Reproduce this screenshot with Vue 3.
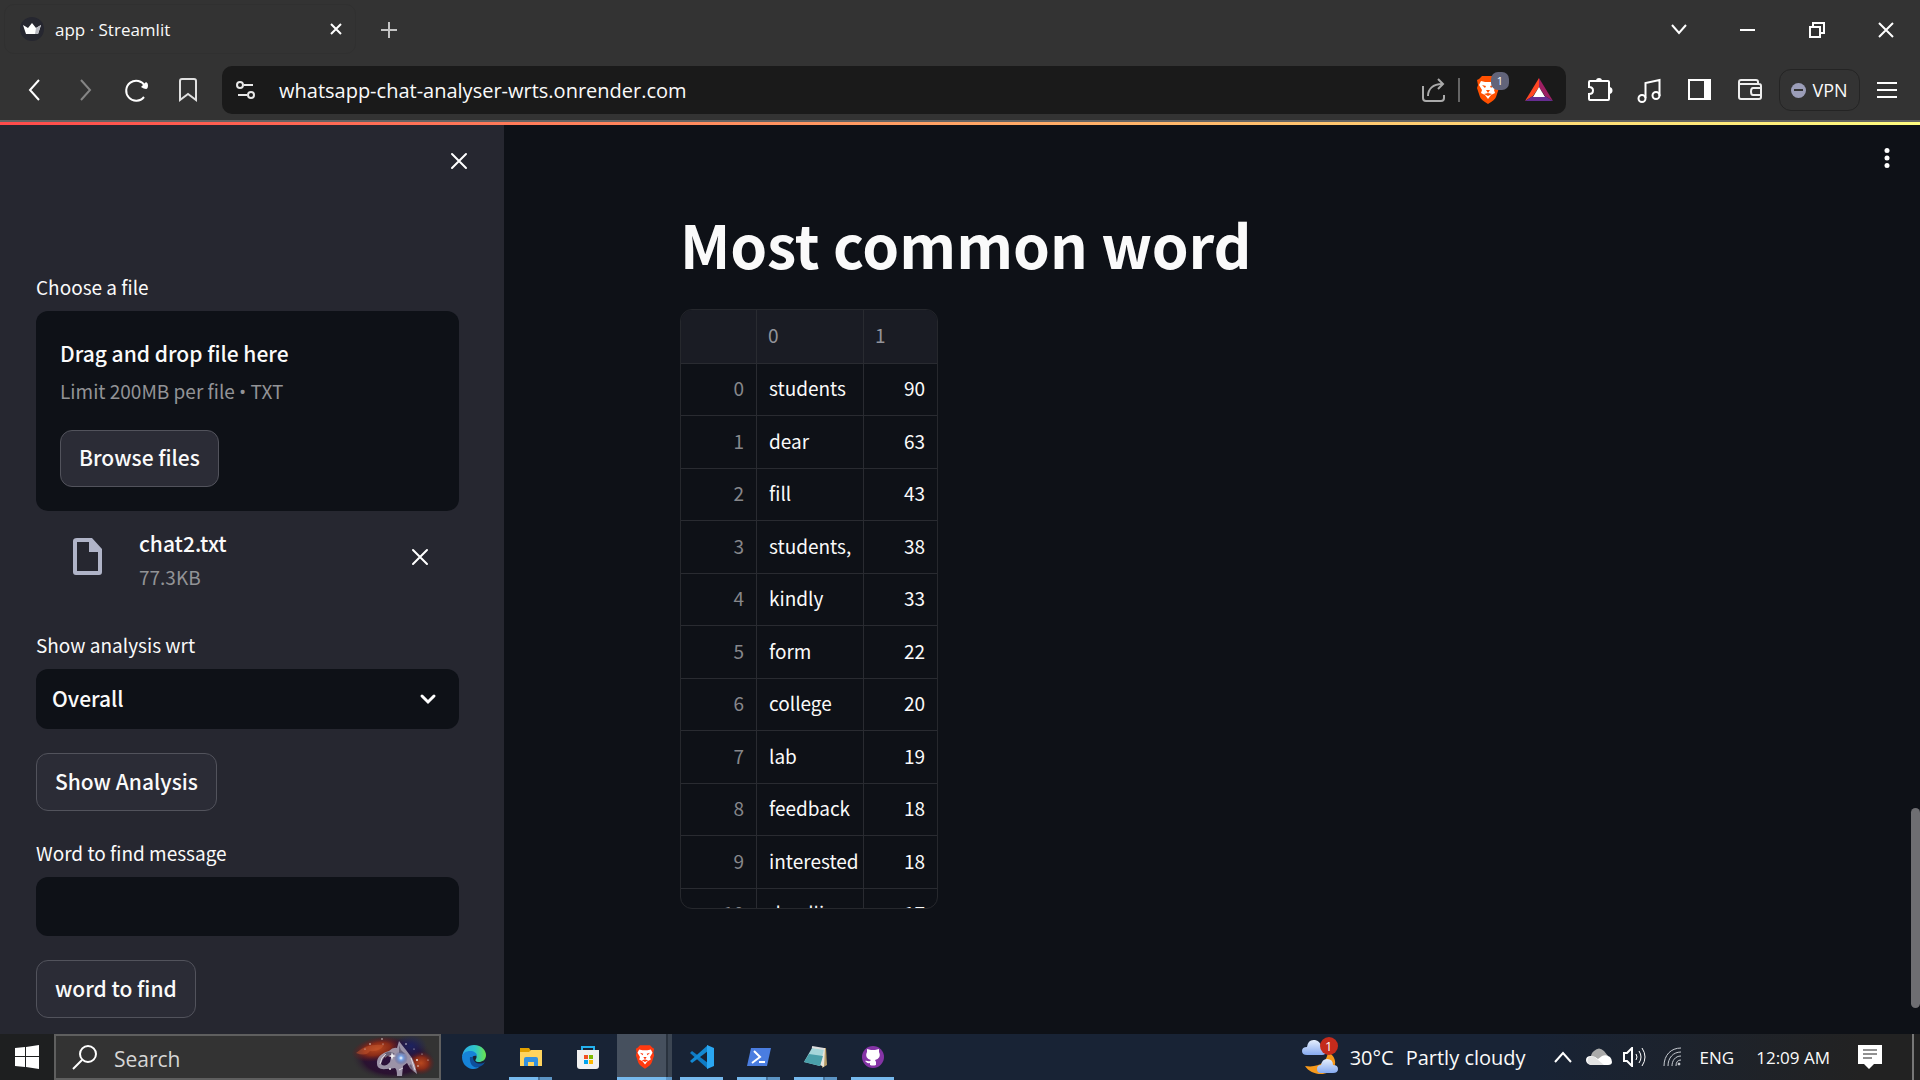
<script setup>
import { ref } from 'vue'

const user = ref('Overall')
const word = ref('')
const query = ref('')

const rows = [
  ['students', 90],
  ['dear', 63],
  ['fill', 43],
  ['students,', 38],
  ['kindly', 33],
  ['form', 22],
  ['college', 20],
  ['lab', 19],
  ['feedback', 18],
  ['interested', 18],
  ['deadline', 17],
]
</script>

<template>
  <div class="screen">
    <header class="browser">
      <div class="tabs">
        <div class="tab">
          <svg class="favicon" width="24" height="24" viewBox="0 0 24 24">
            <circle cx="12" cy="12" r="12" fill="#262730" />
            <path d="M3 8l5 3 4-5 4 5 5-3-3 9H6z" fill="#fff" />
            <path d="M16 11l5-3-3 9h-3z" fill="#b9bac2" />
          </svg>
          <span class="tab-title">app · Streamlit</span>
          <button class="tab-close" aria-label="Close tab">
            <svg width="12" height="12" viewBox="0 0 12 12"><path d="M1 1l10 10M11 1L1 11" stroke="#fff" stroke-width="2" /></svg>
          </button>
        </div>
        <button class="new-tab" aria-label="New tab">
          <svg width="16" height="16" viewBox="0 0 16 16"><path d="M8 0v16M0 8h16" stroke="#c4c4c4" stroke-width="2" /></svg>
        </button>
        <div class="window-controls">
          <button aria-label="Search tabs">
            <svg width="18" height="14" viewBox="0 0 18 14"><path d="M2 2l7 8 7-8" fill="none" stroke="#fff" stroke-width="2" /></svg>
          </button>
          <button aria-label="Minimize">
            <svg width="16" height="16" viewBox="0 0 16 16"><path d="M0 8h15" stroke="#fff" stroke-width="2" /></svg>
          </button>
          <button aria-label="Restore">
            <svg width="16" height="16" viewBox="0 0 16 16"><path d="M1 5h10v10H1zM4 5V1h11v10h-4" fill="none" stroke="#fff" stroke-width="2" /></svg>
          </button>
          <button aria-label="Close">
            <svg width="16" height="16" viewBox="0 0 16 16"><path d="M1 1l14 14M15 1L1 15" stroke="#fff" stroke-width="2" /></svg>
          </button>
        </div>
      </div>

      <div class="toolbar">
        <button class="nav" aria-label="Back">
          <svg width="24" height="24" viewBox="0 0 24 24"><path d="M16 2L7 12l9 10" fill="none" stroke="#fff" stroke-width="2" /></svg>
        </button>
        <button class="nav" aria-label="Forward">
          <svg width="24" height="24" viewBox="0 0 24 24"><path d="M7 2l9 10-9 10" fill="none" stroke="#858585" stroke-width="2" /></svg>
        </button>
        <button class="nav" aria-label="Reload">
          <svg width="26" height="26" viewBox="0 0 26 26"><path d="M20 20a10 10 0 1 1 1-11" fill="none" stroke="#fff" stroke-width="2" /><path d="M17 10l5-5q2 1 2 3 0 4-2 4-2 0-5-2z" fill="#fff" /></svg>
        </button>
        <button class="nav" aria-label="Bookmark">
          <svg width="24" height="24" viewBox="0 0 24 24"><path d="M4 3q0-2 2-2h12q2 0 2 2v19l-8-6-8 6z" fill="none" stroke="#e0e0e0" stroke-width="2" /></svg>
        </button>

        <div class="address">
          <svg class="tune" width="20" height="20" viewBox="0 0 20 20" fill="none" stroke="#e8e8e8" stroke-width="2">
            <circle cx="4" cy="5" r="3" /><path d="M8 5h9" /><circle cx="15" cy="15" r="3" /><path d="M2 15h9" />
          </svg>
          <span class="url">whatsapp-chat-analyser-wrts.onrender.com</span>
          <svg width="24" height="24" viewBox="0 0 24 24" fill="none" stroke="#aaa" stroke-width="2">
            <path d="M1 8v12q0 3 3 3h15q3 0 3-3v-3" /><path d="M6 18C6 11 11 6 20 6" /><path d="M16 1l5 5-5 5" />
          </svg>
          <i class="divider"></i>
          <button class="shield" aria-label="Brave Shields">
            <svg width="24" height="28" viewBox="0 0 24 28">
              <path d="M6 0h12l3 3 2 1-1 5 1 3-3 9q-1 3-8 7-7-4-8-7L1 12l1-3-1-5 2-1z" fill="#ff5000" />
              <path d="M5 5l4 1h6l4-1 2 4-3 5 1 3-4 2-3 4-3-4-4-2 1-3-3-5z" fill="#fff" />
              <path d="M6 9l4 1-1 2zM18 9l-4 1 1 2zM10 14h4l-2 3zM8 18l4-1 4 1-4 2z" fill="#ff5000" />
            </svg>
            <span class="count">1</span>
          </button>
          <svg width="28" height="24" viewBox="0 0 28 24">
            <path d="M14 0v9l-6 9-8 5z" fill="#ff4724" /><path d="M14 0v9l6 9 8 5z" fill="#9e1f63" /><path d="M0 23l8-5h12l8 5z" fill="#662d91" /><path d="M14 9l6 10H8z" fill="#fff" />
          </svg>
        </div>

        <button class="tool" aria-label="Extensions">
          <svg width="26" height="26" viewBox="0 0 26 26"><path d="M3 4h18q1 0 1 1v17q0 1-1 1H3q-1 0-1-1v-5q4 0 4-3.500T2 10V5q0-1 1-1z" fill="none" stroke="#fff" stroke-width="2" /><path d="M9 4a3 3 0 0 1 6 0zM22 10a3 3 0 0 1 0 7z" fill="#fff" /></svg>
        </button>
        <button class="tool" aria-label="Media">
          <svg width="26" height="26" viewBox="0 0 26 26" fill="none" stroke="#fff" stroke-width="2"><circle cx="5" cy="21.500" r="3.500" /><circle cx="19" cy="18.500" r="3.500" /><path d="M8.500 21V6l14-3v16" /></svg>
        </button>
        <button class="tool" aria-label="Sidebar">
          <svg width="24" height="22" viewBox="0 0 24 22"><rect x="1" y="1" width="21" height="19" fill="none" stroke="#fff" stroke-width="2" /><path d="M16 1h7v20h-7z" fill="#fff" /></svg>
        </button>
        <button class="tool" aria-label="Wallet">
          <svg width="24" height="22" viewBox="0 0 24 22" fill="none" stroke="#eee" stroke-width="2"><path d="M20 5V3q0-2-2-2H3Q1 1 1 3v15q0 2 2 2h18q2 0 2-2V7q0-2-2-2H2M22 9h-7q-2 0-2 3.500t2 3.500h7" /></svg>
        </button>
        <button class="vpn"><i class="vpn-dot"></i>VPN</button>
        <button class="menu" aria-label="Menu">
          <svg width="20" height="16" viewBox="0 0 20 16"><path d="M0 1h20M0 8h20M0 15h20" stroke="#fff" stroke-width="2" /></svg>
        </button>
      </div>
    </header>
    <div class="decoration"></div>

    <div class="app">
      <aside class="sidebar">
        <div class="sidebar-head">
          <button aria-label="Close sidebar">
            <svg width="18" height="18" viewBox="0 0 18 18"><path d="M2 2l14 14M16 2L2 16" stroke="#fff" stroke-width="2" stroke-linecap="round" /></svg>
          </button>
        </div>

        <label class="label" for="browse">Choose a file</label>
        <section class="dropzone">
          <div class="drop-title">Drag and drop file here</div>
          <div class="drop-hint">Limit 200MB per file <span class="bullet">•</span> TXT</div>
          <button id="browse" class="btn">Browse files</button>
        </section>
        <div class="file">
          <svg width="30" height="38" viewBox="0 0 30 38"><path d="M4 0h15l10 11v23q0 3-3 3H3q-3 0-3-3V3q0-3 4-3zM4 4v29h21V14h-9V4z" fill="#b0b4c8" fill-rule="evenodd" /></svg>
          <div class="file-text">
            <div class="file-name">chat2.txt</div>
            <div class="file-size">77.3KB</div>
          </div>
          <button aria-label="Remove file">
            <svg width="18" height="18" viewBox="0 0 18 18"><path d="M2 2l14 14M16 2L2 16" stroke="#fff" stroke-width="2" stroke-linecap="round" /></svg>
          </button>
        </div>

        <label class="label" for="user">Show analysis wrt</label>
        <div class="select">
          <select id="user" v-model="user"><option>Overall</option></select>
          <svg width="18" height="12" viewBox="0 0 18 12"><path d="M3 3l6 6 6-6" fill="none" stroke="#fff" stroke-width="3" stroke-linecap="round" /></svg>
        </div>
        <button class="btn spaced">Show Analysis</button>

        <label class="label" for="word">Word to find message</label>
        <input id="word" v-model="word" class="text" type="text" />
        <button class="btn spaced last">word to find</button>
      </aside>

      <main class="main">
        <button class="kebab" aria-label="App menu">
          <svg width="6" height="22" viewBox="0 0 6 22" fill="#fff"><circle cx="3" cy="3.500" r="2.500" /><circle cx="3" cy="11" r="2.500" /><circle cx="3" cy="18.500" r="2.500" /></svg>
        </button>
        <div class="block">
          <h1>Most common word</h1>
          <div class="frame">
            <table>
              <thead>
                <tr><th class="idx"></th><th class="word">0</th><th class="num">1</th></tr>
              </thead>
              <tbody>
                <tr v-for="(row, i) in rows" :key="i">
                  <td class="idx">{{ i }}</td>
                  <td class="word">{{ row[0] }}</td>
                  <td class="num">{{ row[1] }}</td>
                </tr>
              </tbody>
            </table>
          </div>
        </div>
        <i class="thumb"></i>
      </main>
    </div>

    <footer class="taskbar">
      <button class="start" aria-label="Start">
        <svg width="24" height="24" viewBox="0 0 24 24" fill="#fff"><path d="M0 3l10-1v9H0zM11 2l13-2v11H11zM0 12h10v10L0 21zM11 12h13v12l-13-2z" /></svg>
      </button>
      <div class="search">
        <svg width="25" height="25" viewBox="0 0 25 25" fill="none" stroke="#fff" stroke-width="2"><circle cx="16" cy="9" r="8" /><path d="M10 15l-9 9" /></svg>
        <input v-model="query" type="text" placeholder="Search" aria-label="Search" />
        <svg class="nebula" width="84" height="42" viewBox="0 0 84 42">
          <defs>
            <radialGradient id="nebA"><stop offset="0" stop-color="#2c1040" /><stop offset=".7" stop-color="#2a1230" /><stop offset="1" stop-color="#333" stop-opacity="0" /></radialGradient>
            <radialGradient id="nebB"><stop offset="0" stop-color="#b8481f" /><stop offset=".5" stop-color="#8a2c18" /><stop offset="1" stop-color="#5a1a20" stop-opacity="0" /></radialGradient>
            <radialGradient id="nebC"><stop offset="0" stop-color="#fff" /><stop offset=".3" stop-color="#7aa6e8" /><stop offset="1" stop-color="#3a4a90" stop-opacity="0" /></radialGradient>
            <radialGradient id="nebD"><stop offset="0" stop-color="#1c2360" /><stop offset="1" stop-color="#1c2360" stop-opacity="0" /></radialGradient>
          </defs>
          <ellipse cx="42" cy="22" rx="42" ry="23" fill="url(#nebA)" />
          <ellipse cx="26" cy="13" rx="26" ry="12" fill="url(#nebB)" transform="rotate(-12 26 13)" />
          <ellipse cx="70" cy="27" rx="14" ry="12" fill="url(#nebB)" />
          <ellipse cx="60" cy="10" rx="16" ry="12" fill="url(#nebD)" />
          <path d="M5 17q10-10 28-8-4 7-14 6-4 6-14 2z" fill="#c85a30" opacity=".5" />
          <path d="M26 28q-1-9 12-13 4-4 8-3l2-7 3 4 4 5 6 8 3 7 2 9-7-6-3-5-4 3-1 10h-5q0-7-2-8-5 1-9 1-9 1-9-5zM30 28q4 4 9-2l2-9q-9 2-11 11z" fill="#a9a2b4" fill-rule="evenodd" opacity=".9" />
          <path d="M34 17q6-3 10 1-6 0-10 4zM48 9l2 5 4 4-6-1zM60 28l3 8-5-6z" fill="#6a6278" />
          <path d="M29 28q1-7 6-10M60 22l4 12M48 34l4-2" fill="none" stroke="#eee6ea" opacity=".8" />
          <circle cx="50" cy="22" r="7" fill="url(#nebC)" />
          <g fill="#fff" opacity=".85"><circle cx="19" cy="8" r=".8" /><circle cx="31" cy="3" r=".8" /><circle cx="14" cy="13" r=".6" /><circle cx="32" cy="8" r=".6" /><circle cx="66" cy="24" r="1" /><circle cx="71" cy="18" r=".6" /><circle cx="77" cy="24" r=".6" /><circle cx="39" cy="33" r="1" /><circle cx="55" cy="8" r=".8" /><circle cx="63" cy="13" r=".6" /><circle cx="67" cy="30" r=".8" /><path d="M41 16l1 3 3 1-3 1-1 3-1-3-3-1 3-1z" /></g>
        </svg>
      </div>
      <nav class="tasks">
        <button class="task" aria-label="Microsoft Edge">
          <svg width="24" height="24" viewBox="0 0 24 24">
            <defs><linearGradient id="edgeTop"><stop offset="0" stop-color="#2aa9e8" /><stop offset=".55" stop-color="#2fc5c8" /><stop offset="1" stop-color="#6be54a" /></linearGradient></defs>
            <path d="M0 12C1 4 6 0 12 0c8 0 12 6 12 10 0 5-4 7-7 7-4 0-4-2-3-3 2-3-1-7-5-7-5 0-8 3-9 5z" fill="url(#edgeTop)" />
            <path d="M0 12C1 8 4 6 8 6c4 0 7 2 7 5-3-1-6 1-6 4 0 4 4 7 8 7-2 2-5 2-7 2C4 23 0 18 0 12z" fill="#1683d8" />
            <path d="M8 12c-1 6 3 12 9 10 3-1 5-3 6-5-4 3-12 2-12-5z" fill="#0d4f9c" />
          </svg>
        </button>
        <button class="task open many" aria-label="File Explorer">
          <svg width="24" height="20" viewBox="0 0 24 20"><path d="M1 1h9l2 3-2 3H1z" fill="#e2a100" /><path d="M1 5h9l2-2h11v16H1z" fill="#ffd45e" /><path d="M5 19v-7q0-2 2-2h10q2 0 2 2v7h-4v-4H9v4z" fill="#3390df" /></svg>
        </button>
        <button class="task" aria-label="Microsoft Store">
          <svg width="24" height="24" viewBox="0 0 24 24"><path d="M6 6V2h12v4" fill="none" stroke="#24b2ef" stroke-width="2" /><path d="M1 5h22v16q0 3-3 3H4q-3 0-3-3z" fill="#f1f1f1" /><path d="M8 10h4v4H8z" fill="#f25022" /><path d="M13 10h4v4h-4z" fill="#7fba00" /><path d="M8 15h4v4H8z" fill="#00a4ef" /><path d="M13 15h4v4h-4z" fill="#ffb900" /></svg>
        </button>
        <button class="task active open" aria-label="Brave">
          <svg width="20" height="24" viewBox="0 0 24 28">
            <path d="M6 0h12l3 3 2 1-1 5 1 3-3 9q-1 3-8 7-7-4-8-7L1 12l1-3-1-5 2-1z" fill="#ff3a10" />
            <path d="M5 5l4 1h6l4-1 2 4-3 5 1 3-4 2-3 4-3-4-4-2 1-3-3-5z" fill="#fff" />
            <path d="M6 9l4 1-1 2zM18 9l-4 1 1 2zM10 14h4l-2 3zM8 18l4-1 4 1-4 2z" fill="#ff3a10" />
          </svg>
        </button>
        <button class="task open" aria-label="Visual Studio Code">
          <svg width="24" height="24" viewBox="0 0 24 24"><path d="M0 8l2-2 16 12v6z" fill="#0f7bc4" /><path d="M0 16l2 2L18 6V0z" fill="#1389d3" /><path d="M17 0l7 3v18l-7 3z" fill="#2aa7f2" /></svg>
        </button>
        <button class="task open many" aria-label="PowerShell">
          <svg width="24" height="18" viewBox="0 0 24 18"><path d="M4 0h20l-4 18H0z" fill="#4a7de0" /><path d="M7 3l6 6-8 6M12 14h6" fill="none" stroke="#fff" stroke-width="2" /></svg>
        </button>
        <button class="task open many" aria-label="Notepad">
          <svg width="24" height="22" viewBox="0 0 24 22"><path d="M20 2h2l1 17-5 3z" fill="#b69d67" /><path d="M9 2h12l-1 19-4-2z" fill="#e8e6dc" /><path d="M8 2l12 1-4 17-16-4z" fill="#a5d6da" /><path d="M5 8l14 2-3 10-16-4z" fill="#4aa0aa" /><path d="M8 1l12 2" stroke="#ddd" stroke-width="2" /></svg>
        </button>
        <button class="task open" aria-label="GitHub Desktop">
          <svg width="24" height="24" viewBox="0 0 24 24"><circle cx="12" cy="12" r="11" fill="#8534a6" /><path d="M9 20v-2c-3 1-3-1-5-2 2-1 3 1 5 0l1-1c-4-1-6-4-4-8V4l4 1h4l4-1v3c2 4 0 7-4 8l1 2v3q-3 1-6 0z" fill="#fff" /></svg>
        </button>
      </nav>

      <div class="tray">
        <div class="weather">
          <div class="weather-icon">
            <svg width="36" height="36" viewBox="0 0 36 36">
              <defs><linearGradient id="cloudFill" x2="0" y2="1"><stop offset="0" stop-color="#e6effc" /><stop offset="1" stop-color="#86aaf0" /></linearGradient></defs>
              <path d="M26 13c6 3 9 10 6 15-5 10-23 9-29-1 14 2 22-4 23-14z" fill="#f79a1c" />
              <path d="M5 16q-5 0-5-4t5-4q1-8 8-7 5 1 6 6 5 0 5 5 0 4-4 4z" fill="url(#cloudFill)" />
              <path d="M19 34q-4 0-4-4t4-4q1-6 6-6 6 0 6 6 5 0 5 4t-5 4z" fill="url(#cloudFill)" />
            </svg>
            <span class="alert">1</span>
          </div>
          <span class="temp">30°C</span>
          <span>Partly cloudy</span>
        </div>
        <svg class="caret" width="18" height="12" viewBox="0 0 18 12"><path d="M1 11l8-9 8 9" fill="none" stroke="#fff" stroke-width="2" /></svg>
        <svg class="cloud" width="26" height="18" viewBox="0 0 26 18"><path d="M5 12q-1-6 3-9 5-5 10 0l4 5-10 4z" fill="#aaa" /><path d="M5 17q-5-1-5-5t5-4q4 0 7 3l4-3q4-2 8 1 2 2 2 5t-4 3z" fill="#fff" /><path d="M2 10q4-4 9 1l7 6H5q-5-1-3-7z" fill="#e3e3e3" /></svg>
        <svg class="speaker" width="24" height="20" viewBox="0 0 24 20" fill="none" stroke="#fff"><path d="M1 6h3l5-5v18l-5-5H1z" stroke-width="2" /><path d="M13 7q2 3 0 6M16 4q4 6 0 12M19 1q6 9 0 18" /></svg>
        <svg class="wifi" width="19" height="20" viewBox="0 0 19 20" fill="none" stroke="#c8ccd2" stroke-width="1"><path d="M1 19C1 8 8 1 18 1M5 19C5 11 10 5 18 5M9 19c0-5 3-10 9-10M13 19q0-6 5-6" /><circle cx="16" cy="17" r="1" fill="#fff" /></svg>
        <span class="lang">ENG</span>
        <time>12:09 AM</time>
        <button class="notes" aria-label="Notifications">
          <svg width="24" height="24" viewBox="0 0 24 24"><path d="M0 0h24v19h-8l-5 5-5-5H0z" fill="#fff" /><path d="M5 5h14M5 9h14M5 13h9" stroke="#222" stroke-width="1" /></svg>
        </button>
        <i class="desktop-edge"></i>
      </div>
    </footer>
  </div>
</template>

<style>
body { background: #0e1117; }
</style>

<style scoped>
.screen {
  display: flex;
  flex-direction: column;
  height: 100vh;
  overflow: hidden;
  box-sizing: border-box;
  color: #fafafa;
  font-family: "Noto Sans CJK SC", "Noto Sans", sans-serif;
}
.screen * { box-sizing: border-box; }
svg { display: block; flex: none; }
button {
  display: flex;
  align-items: center;
  justify-content: center;
  padding: 0;
  border: 0;
  background: none;
  color: inherit;
  font: inherit;
}

/* Browser chrome */
.browser {
  flex: none;
  background: #333;
  border-bottom: 2px solid #636363;
  font-family: "Open Sans", "Noto Sans", sans-serif;
}
.tabs { display: flex; height: 60px; }
.tab {
  display: flex;
  align-items: center;
  width: 352px;
  height: 50px;
  margin: 4px 0 0 4px;
  padding: 0 11px 0 15px;
  border: 1px solid #303030;
  border-radius: 10px;
}
.tab-title { flex: 1; margin-left: 11px; font-size: 17px; }
.tab-close { width: 16px; height: 24px; }
.new-tab { width: 32px; height: 60px; margin-left: 17px; }
.window-controls { display: flex; margin-left: auto; }
.window-controls button { width: 69px; height: 59px; }
.toolbar { display: flex; align-items: center; height: 60px; padding: 0 13px 0 9px; }
.nav { width: 51px; height: 48px; }
.address {
  display: flex;
  flex: 1;
  align-items: center;
  height: 48px;
  margin: 0 9px;
  padding: 0 13px 0 14px;
  border-radius: 10px;
  background: #1a1a1a;
  font-size: 20px;
}
.url { flex: 1; margin-left: 23px; }
.divider { width: 2px; height: 24px; margin: 0 16px 0 12px; background: #666; }
.shield { position: relative; margin-right: 25px; }
.count {
  position: absolute;
  top: -4px;
  right: -9px;
  width: 18px;
  height: 18px;
  border-radius: 7px;
  background: #62647a;
  font-size: 11px;
  line-height: 18px;
  text-align: center;
}
.tool { width: 50px; height: 48px; }
.vpn {
  gap: 6px;
  width: 81px;
  height: 42px;
  margin-left: 4px;
  border: 1px solid #242424;
  border-radius: 12px;
  font-size: 18px;
}
.vpn-dot {
  display: flex;
  align-items: center;
  justify-content: center;
  width: 15px;
  height: 15px;
  border-radius: 50%;
  background: #9b9db8;
}
.vpn-dot::after { width: 9px; height: 2px; background: #333; content: ""; }
.menu { width: 40px; height: 48px; margin-left: 7px; }
.decoration { flex: none; height: 3px; background: linear-gradient(90deg, #ff4b4b, #fffd80); }

/* App */
.app { display: flex; flex: 1; min-height: 0; background: #0e1117; }
.sidebar {
  flex: none;
  width: 504px;
  padding: 0 45px 0 36px;
  overflow: hidden;
  background: #262730;
}
.sidebar-head { display: flex; justify-content: flex-end; height: 144px; margin-right: -9px; padding-top: 27px; }
.sidebar-head button { height: 18px; }
.label { display: block; height: 34px; margin-bottom: 8px; font-size: 19px; line-height: 36px; }
.dropzone { padding: 23px 24px 24px; border-radius: 12px; background: #0e1117; }
.drop-title { height: 38px; font-size: 21px; font-weight: 500; line-height: 38px; }
.drop-hint { height: 38px; margin-bottom: 20px; color: #929396; font-size: 19px; line-height: 38px; }
.bullet { font-family: "Open Sans", sans-serif; }
.btn {
  height: 58px;
  padding: 0 18px 3px;
  border: 1px solid #52535c;
  border-radius: 12px;
  background: #2b2c36;
  font-size: 21px;
  font-weight: 500;
}
.dropzone .btn { height: 57px; }
.file { display: flex; align-items: center; height: 92px; margin-bottom: 24px; padding: 0 30px 0 37px; }
.file-text { flex: 1; margin-left: 36px; padding-top: 5px; }
.file-name { font-size: 21px; font-weight: 500; line-height: 34px; }
.file-size { color: #929396; font-size: 19px; line-height: 34px; }
.select { position: relative; }
.select select {
  width: 100%;
  height: 60px;
  padding: 0 16px 3px;
  border: 0;
  border-radius: 12px;
  appearance: none;
  background: #0e1117;
  color: inherit;
  font: inherit;
  font-size: 21px;
  font-weight: 500;
}
.select svg { position: absolute; top: 24px; right: 22px; pointer-events: none; }
.spaced { margin: 24px 0; }
.text {
  display: block;
  width: 100%;
  height: 59px;
  padding: 0 16px;
  border: 0;
  border-radius: 12px;
  background: #0e1117;
  color: inherit;
  font: inherit;
  font-size: 21px;
}
.last { margin-bottom: 16px; }

.main { position: relative; flex: 1; min-width: 0; padding-right: 8px; overflow: hidden; }
.kebab { position: absolute; top: 22px; right: 30px; }
.thumb { position: absolute; right: 0; bottom: 26px; width: 9px; height: 200px; border-radius: 5px; background: #6e6e72; }
.block { max-width: 1104px; margin: 0 auto; padding: 79px 24px 0; }
h1 { margin: 0 0 25px; font-size: 59px; font-weight: 700; line-height: 80px; }
.frame {
  width: 258px;
  height: 600px;
  overflow: hidden;
  border: 1px solid #26282d;
  border-radius: 12px;
}
table { width: 100%; border-collapse: separate; border-spacing: 0; table-layout: fixed; font-size: 19px; }
th, td { height: 53px; padding: 0 12px 3px; border-bottom: 1px solid #292b31; line-height: 26px; white-space: nowrap; }
th { height: 54px; background: #1a1c24; color: #92939a; font-weight: 400; text-align: left; }
tbody tr:nth-child(odd) td { height: 52px; }
.idx { width: 76px; }
.word { width: 107px; }
.num { width: 73px; }
.idx, .word { border-right: 1px solid #292b31; }
th.word, th.num { padding-left: 11px; }
td.idx { color: #86878b; text-align: right; }
td.word { padding-right: 0; }
td.num { text-align: right; }

/* Taskbar */
.taskbar {
  display: flex;
  flex: none;
  height: 46px;
  background: linear-gradient(90deg, #182335 0%, #182335 80%, #222 97%);
  font-family: "Open Sans", "Noto Sans", sans-serif;
}
.start { flex: none; width: 54px; background: #1e1f20; }
.search {
  display: flex;
  flex: none;
  align-items: center;
  width: 387px;
  border: 2px solid #5f5f5f;
  background: #333;
  padding: 0 0 0 16px;
}
.search input {
  flex: 1;
  min-width: 0;
  padding: 4px 0 0 17px;
  border: 0;
  background: none;
  color: #ddd;
  font: inherit;
  font-size: 21px;
}
.search input::placeholder { color: #d6d6d6; opacity: 1; }
.nebula { margin-right: 4px; }
.tasks { display: flex; gap: 2px; margin-left: 5px; }
.task { position: relative; width: 55px; height: 46px; }
.task.open::after {
  position: absolute;
  bottom: 0;
  left: 6px;
  width: 43px;
  height: 3px;
  background: #76b9ed;
  content: "";
}
.task.many::after { background: linear-gradient(90deg, #76b9ed 29px, #47739b 29px, #47739b 31px, #5c94c4 31px); }
.task.active { background: linear-gradient(90deg, #46505e 49px, #29323e 49px, #29323e 51px, #3b4552 51px); }
.task.active::after { left: 0; width: 55px; background: linear-gradient(90deg, #76b9ed 49px, #5c94c4 49px); }
.tray { display: flex; align-items: center; margin-left: auto; font-size: 17px; }
.weather { display: flex; align-items: center; gap: 12px; font-size: 20px; }
.weather-icon { position: relative; }
.alert {
  position: absolute;
  top: -2px;
  right: 0;
  width: 18px;
  height: 18px;
  border-radius: 50%;
  background: #c42b1c;
  font-size: 13px;
  line-height: 18px;
  text-align: center;
}
.caret { margin-left: 28px; }
.cloud { margin-left: 14px; }
.speaker { margin-left: 11px; }
.wifi { margin-left: 16px; }
.lang { margin-left: 18px; }
time { margin-left: 22px; }
.notes { margin-left: 28px; }
.desktop-edge { width: 2px; height: 46px; margin: 0 6px 0 30px; background: #777; }
</style>
